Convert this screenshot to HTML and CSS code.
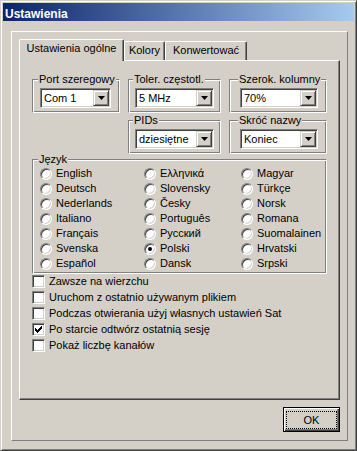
FILE: index.html
```html
<!DOCTYPE html>
<html lang="pl">
<head>
<meta charset="UTF-8">
<title>Ustawienia</title>
<link rel="stylesheet" href="styles.css">
</head>
<body>

<div class="window">
  <div class="titlebar">Ustawienia</div>

  <div class="frame">
    <div class="tabs">
      <div class="tab tab-active tab-general">Ustawienia ogólne</div>
      <div class="tab tab-colors">Kolory</div>
      <div class="tab tab-convert">Konwertować</div>
    </div>

    <div class="tab-panel">
      <div class="groups">
        <div class="group group-port">
          <span class="group-title">Port szeregowy</span>
          <div class="combo combo-port">
            <span class="combo-value">Com 1</span>
            <span class="combo-btn"><svg width="7" height="4" viewBox="0 0 7 4"><path d="M0 0h7L3.5 4z"/></svg></span>
          </div>
        </div>
        <div class="group group-toler">
          <span class="group-title">Toler. częstotl.</span>
          <div class="combo combo-mid">
            <span class="combo-value">5 MHz</span>
            <span class="combo-btn"><svg width="7" height="4" viewBox="0 0 7 4"><path d="M0 0h7L3.5 4z"/></svg></span>
          </div>
        </div>
        <div class="group group-width">
          <span class="group-title">Szerok. kolumny</span>
          <div class="combo combo-right">
            <span class="combo-value">70%</span>
            <span class="combo-btn"><svg width="7" height="4" viewBox="0 0 7 4"><path d="M0 0h7L3.5 4z"/></svg></span>
          </div>
        </div>
        <div class="group group-pids">
          <span class="group-title">PIDs</span>
          <div class="combo combo-mid">
            <span class="combo-value">dziesiętne</span>
            <span class="combo-btn"><svg width="7" height="4" viewBox="0 0 7 4"><path d="M0 0h7L3.5 4z"/></svg></span>
          </div>
        </div>
        <div class="group group-short">
          <span class="group-title">Skróć nazwy</span>
          <div class="combo combo-right">
            <span class="combo-value">Koniec</span>
            <span class="combo-btn"><svg width="7" height="4" viewBox="0 0 7 4"><path d="M0 0h7L3.5 4z"/></svg></span>
          </div>
        </div>

        <div class="group group-lang">
          <span class="group-title">Język</span>
          <div class="radios">
            <div class="radio"><span class="radio-mark"></span>English</div>
            <div class="radio"><span class="radio-mark"></span>Deutsch</div>
            <div class="radio"><span class="radio-mark"></span>Nederlands</div>
            <div class="radio"><span class="radio-mark"></span>Italiano</div>
            <div class="radio"><span class="radio-mark"></span>Français</div>
            <div class="radio"><span class="radio-mark"></span>Svenska</div>
            <div class="radio"><span class="radio-mark"></span>Español</div>
            <div class="radio"><span class="radio-mark"></span>Ελληνικά</div>
            <div class="radio"><span class="radio-mark"></span>Slovensky</div>
            <div class="radio"><span class="radio-mark"></span>Česky</div>
            <div class="radio"><span class="radio-mark"></span>Português</div>
            <div class="radio"><span class="radio-mark"></span>Русский</div>
            <div class="radio radio-checked"><span class="radio-mark"></span>Polski</div>
            <div class="radio"><span class="radio-mark"></span>Dansk</div>
            <div class="radio"><span class="radio-mark"></span>Magyar</div>
            <div class="radio"><span class="radio-mark"></span>Türkçe</div>
            <div class="radio"><span class="radio-mark"></span>Norsk</div>
            <div class="radio"><span class="radio-mark"></span>Romana</div>
            <div class="radio"><span class="radio-mark"></span>Suomalainen</div>
            <div class="radio"><span class="radio-mark"></span>Hrvatski</div>
            <div class="radio"><span class="radio-mark"></span>Srpski</div>
          </div>
        </div>
      </div>

      <div class="checks">
        <div class="check"><span class="check-box"></span>Zawsze na wierzchu</div>
        <div class="check"><span class="check-box"></span>Uruchom z ostatnio używanym plikiem</div>
        <div class="check"><span class="check-box"></span>Podczas otwierania użyj własnych ustawień Sat</div>
        <div class="check"><span class="check-box"><svg width="7" height="7" viewBox="0 0 7 7"><rect x="0" y="2" width="1" height="3"/><rect x="1" y="3" width="1" height="3"/><rect x="2" y="4" width="1" height="3"/><rect x="3" y="3" width="1" height="3"/><rect x="4" y="2" width="1" height="3"/><rect x="5" y="1" width="1" height="3"/><rect x="6" y="0" width="1" height="3"/></svg></span>Po starcie odtwórz ostatnią sesję</div>
        <div class="check"><span class="check-box"></span>Pokaż liczbę kanałów</div>
      </div>
    </div>

    <div class="actions">
      <button class="btn btn-default"><span class="btn-focus">OK</span></button>
    </div>
  </div>
</div>

</body>
</html>
```

FILE: styles.css
```css
html, body { margin: 0; padding: 0; }
body { background: #d4d0c8; font-family: "Liberation Sans", Arial, sans-serif; font-size: 11px; color: #000; }

.window { width: 357px; height: 451px; box-sizing: border-box; padding: 2px; background: #d4d0c8; border: 1px solid; border-color: #d4d0c8 #404040 #404040 #d4d0c8; box-shadow: inset 1px 1px #fff, inset -1px -1px #808080; }
.titlebar { height: 18px; box-sizing: border-box; padding: 4px 0 0 2px; line-height: 14px; font-size: 12px; font-weight: bold; color: #fff; background: linear-gradient(to right, #0a246a, #a6caf0); }

.frame { width: 337px; height: 410px; box-sizing: border-box; margin: 10px 0 0 8px; padding: 7px 7px 0; border: 1px solid; border-color: #fff #808080 #808080 #fff; }

/* tabs */
.tabs { display: flex; align-items: flex-end; height: 21px; }
.tab { height: 19px; box-sizing: border-box; padding-top: 2px; line-height: 13px; text-align: center; border-left: 1px solid #fff; border-top: 1px solid #fff; border-right: 1px solid #404040; border-radius: 2px 2px 0 0; box-shadow: inset -1px 0 #808080; }
.tab-active { height: 22px; margin-bottom: -1px; position: relative; z-index: 1; background: #d4d0c8; }
.tab-general { width: 105px; }
.tab-colors { width: 41px; }
.tab-convert { width: 82px; }

.tab-panel { height: 340px; box-sizing: border-box; padding: 18px 0 0 12px; border: 1px solid; border-color: #fff #404040 #404040 #fff; box-shadow: inset -1px -1px #808080; }

/* group boxes */
.groups { display: grid; grid-template-columns: 88px 93px 98px; grid-template-rows: 34px 34px auto; column-gap: 8px; row-gap: 7px; }
.group { box-sizing: border-box; border: 1px solid; border-color: #808080 #fff #fff #808080; box-shadow: inset 1px 1px #fff, inset -1px -1px #808080; }
.group-title { display: block; width: max-content; margin: -7px 0 0 -2px; padding: 0 1px; line-height: 13px; background: #d4d0c8; }
.group-port { padding-left: 7px; }
.group-toler, .group-pids { padding-left: 6px; }
.group-width, .group-short { padding-left: 10px; }
.group-pids { grid-column: 2; }
.group-lang { grid-column: 1 / -1; height: 115px; margin-top: -2px; padding-left: 7px; }

/* combo boxes */
.combo { display: flex; height: 20px; box-sizing: border-box; margin-top: 2px; padding: 1px; background: #fff; border: 1px solid; border-color: #808080 #fff #fff #808080; box-shadow: inset 1px 1px #404040, inset -1px -1px #d4d0c8; }
.combo-port { width: 71px; }
.combo-mid { width: 79px; }
.combo-right { width: 78px; }
.combo-value { flex: 1; padding-left: 2px; line-height: 16px; white-space: nowrap; overflow: hidden; }
.combo-btn { width: 16px; height: 16px; box-sizing: border-box; display: flex; align-items: center; justify-content: center; background: #d4d0c8; border: 1px solid; border-color: #d4d0c8 #404040 #404040 #d4d0c8; box-shadow: inset 1px 1px #fff, inset -1px -1px #808080; }
.combo-btn svg { fill: #000; display: block; }

/* radios */
.radios { display: grid; grid-template-columns: 104px 97px auto; grid-template-rows: repeat(7, 15px); grid-auto-flow: column; }
.radio { display: flex; align-items: center; gap: 4px; line-height: 13px; white-space: nowrap; }
.radio-mark { width: 12px; height: 12px; box-sizing: border-box; flex: none; display: flex; align-items: center; justify-content: center; border-radius: 50%; background: #fff; border: 1px solid; border-color: #808080 #fff #fff #808080; box-shadow: inset 1px 1px #404040, inset -1px -1px #d4d0c8; }
.radio-checked .radio-mark::after { content: ""; width: 4px; height: 4px; border-radius: 50%; background: #000; }

/* checkboxes */
.checks { margin-top: -1px; }
.check { display: flex; align-items: center; gap: 4px; height: 16px; white-space: nowrap; }
.check-box { width: 13px; height: 13px; box-sizing: border-box; flex: none; display: flex; align-items: center; justify-content: center; background: #fff; border: 1px solid; border-color: #808080 #fff #fff #808080; box-shadow: inset 1px 1px #404040, inset -1px -1px #d4d0c8; }
.check-box svg { display: block; fill: #000; }

/* buttons */
.actions { display: flex; justify-content: flex-end; margin-top: 7px; }
.btn { width: 57px; height: 25px; box-sizing: border-box; display: flex; padding: 3px 2px 2px; font: inherit; color: #000; background: #d4d0c8; border: 1px solid #000; box-shadow: inset 1px 1px #fff, inset -1px -1px #404040, inset -2px -2px #808080; }
.btn-focus { flex: 1; display: flex; align-items: center; justify-content: center; border: 1px dotted #000; }
```
